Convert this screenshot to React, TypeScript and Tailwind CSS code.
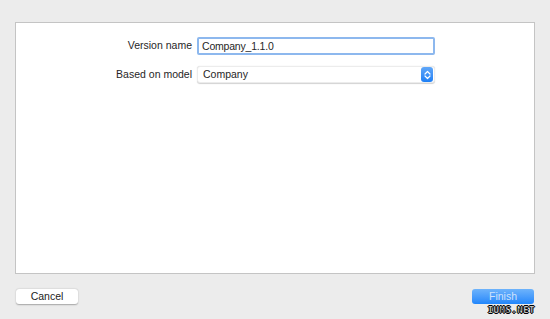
import React, { useState } from 'react';

const StepperIcon: React.FC = () => (
  <svg width="7" height="10" viewBox="0 0 7 10" fill="none">
    <path d="M1 4 L3.5 1.5 L6 4" stroke="white" strokeWidth="1.2" strokeLinecap="round" strokeLinejoin="round" />
    <path d="M1 6 L3.5 8.5 L6 6" stroke="white" strokeWidth="1.2" strokeLinecap="round" strokeLinejoin="round" />
  </svg>
);

const App: React.FC = () => {
  const [versionName, setVersionName] = useState('Company_1.1.0');

  return (
    <div
      className="w-[550px] h-[319px] bg-[#ececec] pt-[22px] px-[15px] text-[10.5px] text-[#262626] relative"
      style={{ fontFamily: '"Liberation Sans", Arial, sans-serif' }}
    >
      <div className="h-[252px] w-[520px] bg-white border border-[#c4c4c4] pt-[14px]">
        <div className="flex items-center h-[18px]">
          <label className="w-[181px] text-right pr-[5px]">Version name</label>
          <input
            type="text"
            value={versionName}
            onChange={(e) => setVersionName(e.target.value)}
            className="w-[238px] h-[18px] px-[3px] border-[2px] border-[#8db8ee] rounded-[2px] outline-none text-[10.5px] text-[#1f1f1f] tracking-[-0.2px]"
          />
        </div>
        <div className="flex items-center h-[17px] mt-[11px]">
          <label className="w-[181px] text-right pr-[5px]">Based on model</label>
          <div className="w-[238px] h-[17px] flex items-center justify-between bg-white border border-[#ececec] rounded-[3px] shadow-[0_0.5px_1px_rgba(0,0,0,0.18)] pl-[5px] pr-[1px]">
            <span>Company</span>
            <span className="w-[12px] h-[15px] rounded-[3px] bg-gradient-to-b from-[#5fa6f8] to-[#1c7ff5] flex items-center justify-center">
              <StepperIcon />
            </span>
          </div>
        </div>
      </div>

      <div className="flex justify-between items-center mt-[15px] px-[1px]">
        <button className="w-[62px] h-[15px] bg-white rounded-[3px] shadow-[0_0.5px_1.5px_rgba(0,0,0,0.3)] text-[10.5px] text-[#1c1c1c] leading-none">
          Cancel
        </button>
        <button className="w-[62px] h-[15px] rounded-[3px] bg-gradient-to-b from-[#6db3fb] to-[#1f86fb] text-[10.5px] text-[#cfe2fb] leading-none">
          Finish
        </button>
      </div>

      <span
        className="absolute right-[15px] bottom-[4px] text-[9px] font-bold text-white tracking-[0.5px] leading-none"
        style={{ fontFamily: '"DejaVu Sans Mono", monospace', WebkitTextStroke: '0.4px black', textShadow: '1px 0 0 #000, -1px 0 0 #000, 0 1px 0 #000, 0 -1px 0 #000' }}
      >
        IUMS.NET
      </span>
    </div>
  );
};

export default App;
